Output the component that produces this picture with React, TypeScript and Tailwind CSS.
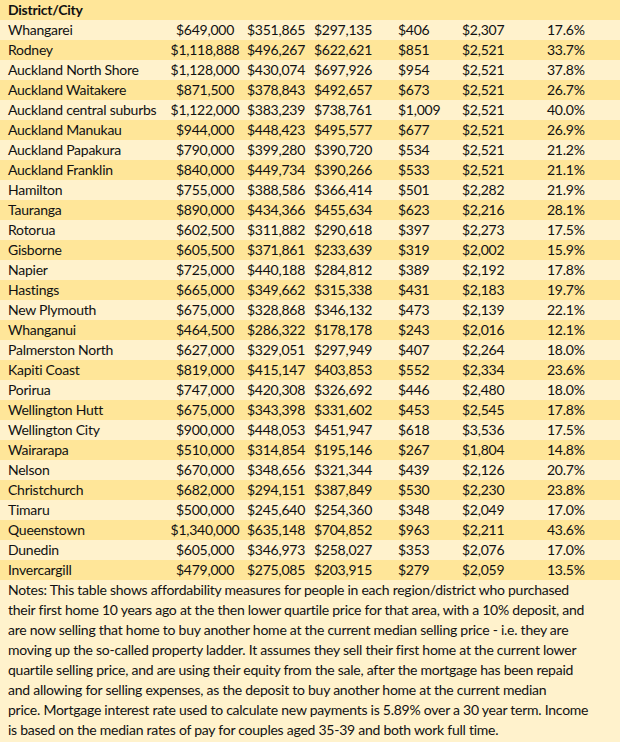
const rows: [string, string, string, string, string, string, string][] = [
  ['Whangarei', '$649,000', '$351,865', '$297,135', '$406', '$2,307', '17.6%'],
  ['Rodney', '$1,118,888', '$496,267', '$622,621', '$851', '$2,521', '33.7%'],
  ['Auckland North Shore', '$1,128,000', '$430,074', '$697,926', '$954', '$2,521', '37.8%'],
  ['Auckland Waitakere', '$871,500', '$378,843', '$492,657', '$673', '$2,521', '26.7%'],
  ['Auckland central suburbs', '$1,122,000', '$383,239', '$738,761', '$1,009', '$2,521', '40.0%'],
  ['Auckland Manukau', '$944,000', '$448,423', '$495,577', '$677', '$2,521', '26.9%'],
  ['Auckland Papakura', '$790,000', '$399,280', '$390,720', '$534', '$2,521', '21.2%'],
  ['Auckland Franklin', '$840,000', '$449,734', '$390,266', '$533', '$2,521', '21.1%'],
  ['Hamilton', '$755,000', '$388,586', '$366,414', '$501', '$2,282', '21.9%'],
  ['Tauranga', '$890,000', '$434,366', '$455,634', '$623', '$2,216', '28.1%'],
  ['Rotorua', '$602,500', '$311,882', '$290,618', '$397', '$2,273', '17.5%'],
  ['Gisborne', '$605,500', '$371,861', '$233,639', '$319', '$2,002', '15.9%'],
  ['Napier', '$725,000', '$440,188', '$284,812', '$389', '$2,192', '17.8%'],
  ['Hastings', '$665,000', '$349,662', '$315,338', '$431', '$2,183', '19.7%'],
  ['New Plymouth', '$675,000', '$328,868', '$346,132', '$473', '$2,139', '22.1%'],
  ['Whanganui', '$464,500', '$286,322', '$178,178', '$243', '$2,016', '12.1%'],
  ['Palmerston North', '$627,000', '$329,051', '$297,949', '$407', '$2,264', '18.0%'],
  ['Kapiti Coast', '$819,000', '$415,147', '$403,853', '$552', '$2,334', '23.6%'],
  ['Porirua', '$747,000', '$420,308', '$326,692', '$446', '$2,480', '18.0%'],
  ['Wellington Hutt', '$675,000', '$343,398', '$331,602', '$453', '$2,545', '17.8%'],
  ['Wellington City', '$900,000', '$448,053', '$451,947', '$618', '$3,536', '17.5%'],
  ['Wairarapa', '$510,000', '$314,854', '$195,146', '$267', '$1,804', '14.8%'],
  ['Nelson', '$670,000', '$348,656', '$321,344', '$439', '$2,126', '20.7%'],
  ['Christchurch', '$682,000', '$294,151', '$387,849', '$530', '$2,230', '23.8%'],
  ['Timaru', '$500,000', '$245,640', '$254,360', '$348', '$2,049', '17.0%'],
  ['Queenstown', '$1,340,000', '$635,148', '$704,852', '$963', '$2,211', '43.6%'],
  ['Dunedin', '$605,000', '$346,973', '$258,027', '$353', '$2,076', '17.0%'],
  ['Invercargill', '$479,000', '$275,085', '$203,915', '$279', '$2,059', '13.5%'],
];

const notes = [
  'Notes: This table shows affordability measures for people in each region/district who purchased',
  'their first home 10 years ago at the then lower quartile price for that area, with a 10% deposit, and',
  'are now selling that home to buy another home at the current median selling price - i.e. they are',
  'moving up the so-called property ladder. It assumes they sell their first home at the current lower',
  'quartile selling price, and are using their equity from the sale, after the mortgage has been repaid',
  'and allowing for selling expenses, as the deposit to buy another home at the current median',
  'price. Mortgage interest rate used to calculate new payments is 5.89% over a 30 year term. Income',
  'is based on the median rates of pay for couples aged 35-39 and both work full time.',
];

export default function App() {
  return (
    <div
      className="w-[620px] h-[742px] bg-[#fff2cc] text-[#111] text-[14px] leading-[20px] tracking-[-0.25px]"
      style={{ fontFamily: 'Lato, "Open Sans", sans-serif' }}
    >
      <div className="h-5 bg-[#ffe699] pl-2 font-bold">District/City</div>
      {rows.map(([name, a, b, c, d, e, f], i) => (
        <div key={name} className={`flex h-5 ${i % 2 ? 'bg-[#ffe699]' : 'bg-[#fff2cc]'}`}>
          <div className="w-[166px] pl-2 whitespace-nowrap">{name}</div>
          <div className="w-[78px] text-center">{a}</div>
          <div className="w-[67px] pl-[3px]">{b}</div>
          <div className="w-[84px] pl-[3px]">{c}</div>
          <div className="w-[64px] pl-[3px]">{d}</div>
          <div className="w-[85px] pl-[3px]">{e}</div>
          <div className="pl-[3px]">{f}</div>
        </div>
      ))}
      <div className="pl-2">
        {notes.map((line) => (
          <div key={line} className="h-5 whitespace-nowrap">
            {line}
          </div>
        ))}
      </div>
    </div>
  );
}
